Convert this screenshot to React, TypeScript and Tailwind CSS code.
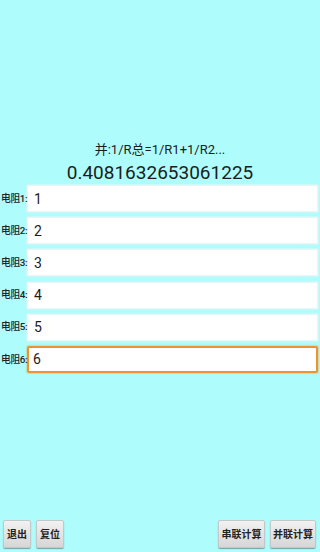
const values = ['1', '2', '3', '4', '5', '6'];

function Btn({ label, className }: { label: string; className: string }) {
  return (
    <button
      type="button"
      className={`h-[28px] rounded-[2px] border border-[#c4c8c8] bg-gradient-to-b from-[#f2f2f2] to-[#d6d6d6] text-[10px] font-bold text-[#222] shadow-[0_1px_1px_rgba(0,0,0,0.35)] ${className}`}
    >
      {label}
    </button>
  );
}

export default function App() {
  return (
    <div
      className="flex h-[552px] w-[320px] flex-col bg-[#affcfc] text-[#1c1c1c]"
      style={{ fontFamily: 'Roboto, "Noto Sans CJK SC", sans-serif' }}
    >
      <div className="flex flex-col items-center pt-[142px]">
        <p className="text-[13px] leading-[16px]">并:1/R总=1/R1+1/R2...</p>
        <p className="mt-[3px] text-[19px] leading-[23px]">0.4081632653061225</p>
      </div>

      <div className="mt-[1px] flex flex-col gap-[5.2px] pr-[2px]">
        {values.map((v, i) => (
          <div key={i} className="flex items-center">
            <span className="relative z-10 w-[27px] shrink-0 whitespace-nowrap pl-[1px] text-[9.8px] font-medium leading-none tracking-[-0.4px] text-[#222]">
              电阻{i + 1}:
            </span>
            <input
              readOnly
              value={v}
              className={
                i === 5
                  ? 'h-[27px] min-w-0 flex-1 rounded-[2px] border-2 border-[#eb9430] bg-white px-[4px] text-[14px] text-[#1c1c1c] outline-none shadow-[0_0_1px_1px_rgba(240,160,60,0.35)]'
                  : 'h-[27px] min-w-0 flex-1 rounded-[1px] border border-[#e6f6f6] bg-white px-[6px] text-[14px] text-[#1c1c1c] outline-none shadow-[0_0_0_1px_#cdf8f8]'
              }
            />
          </div>
        ))}
      </div>

      <div className="mt-auto flex items-center pb-[4px] pl-[3px] pr-[4px]">
        <Btn label="退出" className="w-[28px]" />
        <Btn label="复位" className="ml-[5px] w-[28px]" />
        <Btn label="串联计算" className="ml-auto w-[47px]" />
        <Btn label="并联计算" className="ml-[5px] w-[46px]" />
      </div>
    </div>
  );
}
